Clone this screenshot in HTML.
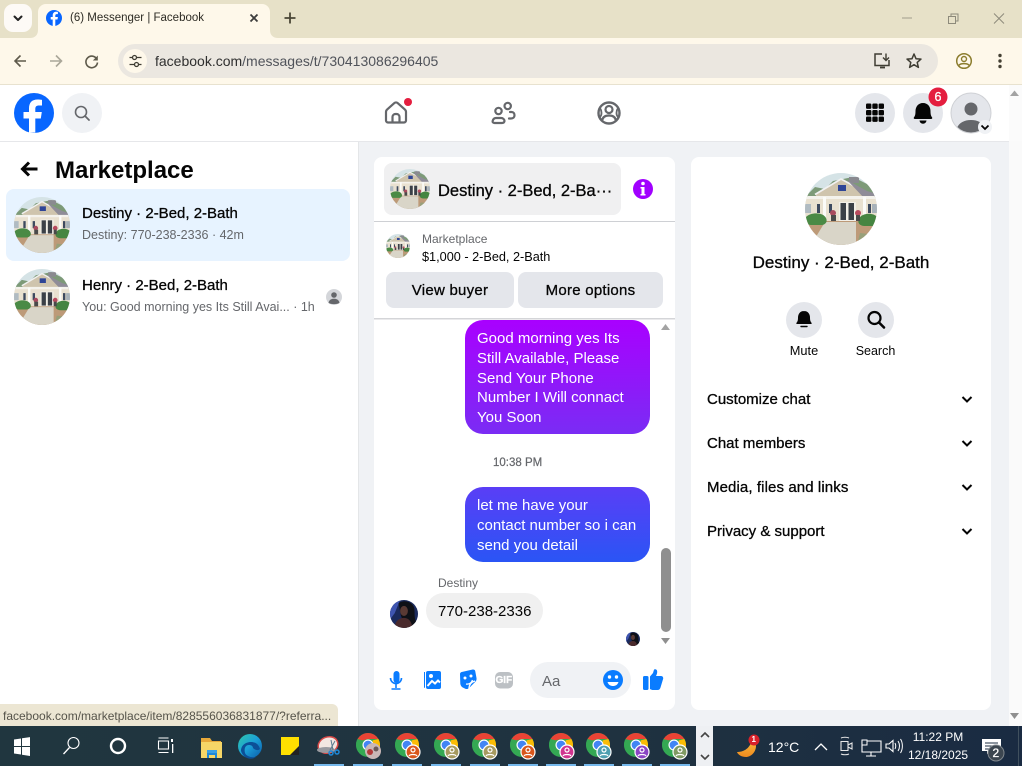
<!DOCTYPE html>
<html lang="en"><head><meta charset="utf-8"><title>(6) Messenger | Facebook</title>
<style>
html,body{margin:0;padding:0;width:1022px;height:766px;overflow:hidden;background:#fff}
body{position:relative;font-family:"Liberation Sans",Arial,sans-serif;color:#050505}
svg.g{position:absolute;left:0;top:0}
.t{position:absolute;white-space:nowrap;line-height:20px;height:20px;font-size:15px}
.s{-webkit-text-stroke:.3px currentColor}
.g6{color:#65676b}
.w{color:#fff}
</style></head><body>
<svg class="g" width="1022" height="766" viewBox="0 0 1022 766" xmlns="http://www.w3.org/2000/svg">
<defs>
<clipPath id="cc"><circle cx="36" cy="36" r="36"/></clipPath>
<symbol id="house" viewBox="0 0 72 72"><g clip-path="url(#cc)">
<rect width="72" height="72" fill="#d5e3e6"/>
<path d="M0 24L10 14l10 2 8-8 20-4 24 12v10H0z" fill="#7d9a78"/>
<path d="M44 4h10v6H44z" fill="#8a8a90"/>
<path d="M11 21L36 6l29 15v6H11z" fill="#cfc4ad"/>
<path d="M10 21.500L36 6l30 16" fill="none" stroke="#f1f1f1" stroke-width="1.800"/>
<path d="M42 7l20 11 10 3v5H60z" fill="#8f8c98"/>
<rect x="33" y="12" width="8" height="6" fill="#2f4596"/>
<rect x="0" y="24" width="72" height="25" fill="#e9e1d0"/>
<rect x="0" y="23" width="72" height="3" fill="#f4f2ec"/>
<rect x="0" y="31" width="6" height="9" fill="#b0bbc2"/><rect x="12" y="31" width="3" height="9" fill="#3d4a5f"/><rect x="24" y="31" width="3" height="9" fill="#3d4a5f"/><rect x="63" y="31" width="3" height="9" fill="#3d4a5f"/><rect x="67" y="31" width="5" height="9" fill="#a8b2ba"/>
<rect x="34" y="29" width="17" height="19" fill="#f2efe7"/><rect x="35.500" y="30" width="5.500" height="17" fill="#3b4047"/><rect x="43.500" y="30" width="5.500" height="17" fill="#3b4047"/>
<rect x="18" y="24" width="3" height="25" fill="#fbfbf8"/><rect x="58" y="24" width="3" height="25" fill="#fbfbf8"/>
<rect x="0" y="48" width="72" height="24" fill="#bd9a78"/>
<path d="M6 72L20 49h31v23z" fill="#d9d5c8"/>
<path d="M1 44c5-5 17-5 20 1 2 4-1 7-5 7H6c-4 0-7-3-5-8z" fill="#4a8a45"/>
<path d="M54 46c2-6 14-7 18-2v9H60c-5 0-8-3-6-7z" fill="#458541"/>
<circle cx="28" cy="40" r="3" fill="#a84a5e"/><circle cx="53" cy="40" r="3" fill="#b84a5e"/>
<rect x="26" y="42" width="5" height="6" fill="#4a4a4a"/><rect x="51" y="42" width="4" height="6" fill="#4a4a4a"/>
<path d="M52 72l3-12 17 2v10z" fill="#97a07a"/>
</g></symbol>
<symbol id="girl" viewBox="0 0 72 72"><g clip-path="url(#cc)">
<rect width="72" height="72" fill="#1b2a5c"/>
<path d="M0 0h26L12 34 0 50z" fill="#3f55b0"/>
<path d="M22 8c14-10 36-4 40 12 3 14-2 32 10 40v12H40L28 40z" fill="#0e1016"/>
<ellipse cx="36" cy="28" rx="10" ry="13" fill="#5a3a34"/>
<path d="M12 72c0-16 10-26 24-26s20 12 22 26z" fill="#4a2a2c"/>
</g></symbol>
<symbol id="chrome" viewBox="0 0 26 26">
<circle cx="13" cy="13" r="13" fill="#34a853"/>
<path d="M13 0A13 13 0 0 1 24.300 6.500L13 6.500 7 8 1.700 6.500A13 13 0 0 1 13 0z" fill="#ea4335"/>
<path d="M1.700 6.500L7.500 16 13 26 1 17.500C-.500 13 0 9 1.700 6.500z" fill="#34a853"/>
<path d="M24.300 6.500A13 13 0 0 1 13 26L18.500 16 18 8z" fill="#fbbc05"/>
<circle cx="13" cy="13" r="6" fill="#fff"/><circle cx="13" cy="13" r="4.700" fill="#4285f4"/>
</symbol>
<linearGradient id="bp" x1="0" y1="0" x2="0" y2="1"><stop offset="0" stop-color="#a900ff"/><stop offset="1" stop-color="#7a2cf4"/></linearGradient>
<linearGradient id="bb" x1="0" y1="0" x2="0" y2="1"><stop offset="0" stop-color="#5a3ef6"/><stop offset="1" stop-color="#2a55f5"/></linearGradient>
<linearGradient id="tb" x1="0" y1="0" x2="1" y2="0"><stop offset="0" stop-color="#20363f"/><stop offset=".6" stop-color="#1f3240"/><stop offset="1" stop-color="#1a2b42"/></linearGradient>
<linearGradient id="edge" x1="0" y1="0" x2="1" y2="1"><stop offset="0" stop-color="#2fc7a8"/><stop offset=".5" stop-color="#1b9fd8"/><stop offset="1" stop-color="#0b5aa8"/></linearGradient>
<linearGradient id="moon" x1="0" y1="0" x2="0" y2="1"><stop offset="0" stop-color="#f8b53a"/><stop offset="1" stop-color="#ee8a1e"/></linearGradient>
</defs>

<!-- chrome frame -->
<rect width="1022" height="38" fill="#e7e1c8"/>
<rect y="38" width="1022" height="46" fill="#fef8ea"/>
<rect y="84" width="1022" height="1" fill="#e8e2cf"/>
<path d="M30 38c5 0 8-3 8-8V12c0-4.500 3.500-8 8-8h216c4.500 0 8 3.500 8 8v18c0 5 3 8 8 8z" fill="#fef8ea"/>
<rect x="4" y="4" width="28" height="28" rx="9" fill="#fdfaf6"/>
<path d="M14.500 16.500L18 20l3.500-3.500" fill="none" stroke="#222" stroke-width="2" stroke-linecap="round" stroke-linejoin="round"/>
<circle cx="54" cy="18" r="8" fill="#0866ff"/>
<path d="M52.700 26v-6.500h-2v-2.500h2v-1.600c0-2.400 1.300-3.700 3.500-3.700.7 0 1.300.1 1.700.2v2.200h-1.200c-1 0-1.400.5-1.400 1.500V17h2.600l-.4 2.500h-2.200V26z" fill="#fff"/>
<path d="M250.500 14.500l7 7M257.500 14.500l-7 7" stroke="#3c3c3c" stroke-width="1.800"/>
<path d="M290 12.500v11M284.500 18h11" stroke="#4a4636" stroke-width="1.800"/>
<path d="M902 18h10" stroke="#a19d8c" stroke-width="1"/>
<path d="M948.500 16.500h7v7h-7zM951 16.500v-2.500h7v7h-2.500" fill="none" stroke="#8d8a7b" stroke-width="1"/>
<path d="M994 13.500l10 10M1004 13.500l-10 10" stroke="#8d8a7b" stroke-width="1"/>
<path d="M26 61H15M20.500 55.500L15 61l5.500 5.500" fill="none" stroke="#5e5a4b" stroke-width="1.600"/>
<path d="M50 61h11M56 55.500l5.500 5.500-5.500 5.500" fill="none" stroke="#aaa799" stroke-width="1.600"/>
<path d="M97 59.500a5.800 5.800 0 1 0 .5 3" fill="none" stroke="#5e5a4b" stroke-width="1.600"/><path d="M97.800 55.500v5h-5z" fill="#5e5a4b"/>
<rect x="118" y="44" width="820" height="34" rx="17" fill="#ebe7e0"/>
<circle cx="135" cy="61" r="12" fill="#fef8ea"/>
<path d="M129.500 57.500h3M137 57.500h4.500M129.500 64.500h4.500M139 64.500h2.500" stroke="#3f3d33" stroke-width="1.300"/>
<circle cx="134.500" cy="57.500" r="2" fill="none" stroke="#3f3d33" stroke-width="1.300"/><circle cx="136.500" cy="64.500" r="2" fill="none" stroke="#3f3d33" stroke-width="1.300"/>
<path d="M882 54h-7v11.500h14V60" fill="none" stroke="#3f3d33" stroke-width="1.500"/><path d="M880 67.500h5" stroke="#3f3d33" stroke-width="1.800"/>
<path d="M886 53.500v6.500M883 57.500l3 3 3-3" fill="none" stroke="#3f3d33" stroke-width="1.400"/>
<path d="M914 54l2 4.700 5 .4-3.800 3.300 1.200 5-4.400-2.700-4.400 2.700 1.200-5-3.800-3.300 5-.4z" fill="none" stroke="#3f3d33" stroke-width="1.500" stroke-linejoin="round"/>
<circle cx="964" cy="61" r="7.300" fill="none" stroke="#8c7d2e" stroke-width="1.500"/><circle cx="964" cy="59" r="2.500" fill="none" stroke="#8c7d2e" stroke-width="1.400"/><path d="M958.800 65.500c1.500-2.500 9-2.500 10.400 0" fill="none" stroke="#8c7d2e" stroke-width="1.400"/>
<circle cx="1000" cy="55.500" r="1.700" fill="#444033"/><circle cx="1000" cy="61" r="1.700" fill="#444033"/><circle cx="1000" cy="66.500" r="1.700" fill="#444033"/>

<!-- page -->
<rect y="141" width="1022" height="585" fill="#f0f2f5"/>
<rect x="1009" y="85" width="13" height="641" fill="#fafafa"/>
<rect y="141" width="358" height="585" fill="#fff"/>
<rect x="358" y="141" width="1" height="585" fill="#e4e6e8"/>
<rect y="85" width="1009" height="56" fill="#fff"/>
<rect y="141" width="1009" height="1" fill="#e6e7ea"/>
<rect x="1009" y="85" width="13" height="56" fill="#fbfbfb"/>
<path d="M1014.500 90.500l-4.500 5.500h9z" fill="#a3a3a3"/><path d="M1010 713l4.500 6 4.500-6z" fill="#8f8f8f"/>

<!-- header -->
<circle cx="34" cy="113" r="20" fill="#0866ff"/>
<path d="M29 132.600V118.500h-5.500V112H29v-3.500c0-6 3-9 8.500-9 1.700 0 3.500.2 4.500.4v5.600h-3c-2.700 0-3.700 1.200-3.700 3.600V112h6.500l-1 6.500h-5.500v14.100z" fill="#fff"/>
<circle cx="82" cy="113" r="20" fill="#f0f2f5"/>
<circle cx="81" cy="112" r="5.500" fill="none" stroke="#65676b" stroke-width="1.600"/><path d="M85 116l4 4" stroke="#65676b" stroke-width="1.800" stroke-linecap="round"/>
<path d="M386 120.500V112c0-1 .5-2 1.200-2.600l7-6.200c1-.9 2.600-.9 3.600 0l7 6.200c.7.600 1.200 1.600 1.200 2.600v8.500c0 1-.8 2-2 2h-16c-1.200 0-2-1-2-2z" fill="none" stroke="#65676b" stroke-width="2.200"/>
<path d="M392.500 122v-5a3 3 0 0 1 3-3h1a3 3 0 0 1 3 3v5" fill="none" stroke="#65676b" stroke-width="2.200"/>
<circle cx="408" cy="102" r="4" fill="#e41e3f"/>
<circle cx="498.500" cy="111" r="3.200" fill="none" stroke="#65676b" stroke-width="2.200"/><circle cx="507.700" cy="106" r="3.200" fill="none" stroke="#65676b" stroke-width="2.200"/>
<path d="M496 118h5c2 0 3.500 1.400 3.500 3 0 1-.8 2-2.500 2h-7.500c-1.500 0-2.200-1-1.800-2.200.5-1.600 1.600-2.800 3.300-2.800z" fill="none" stroke="#65676b" stroke-width="2.200"/>
<path d="M510 112h1.500c2 0 3 1.500 3 3.200 0 2-1.300 3.300-3.500 3.300H509" fill="none" stroke="#65676b" stroke-width="2.200" stroke-linecap="round"/>
<circle cx="609" cy="113" r="10.500" fill="none" stroke="#65676b" stroke-width="2.400"/><circle cx="609" cy="109.500" r="3.500" fill="none" stroke="#65676b" stroke-width="2.200"/>
<path d="M602 121c.5-4 3-5.500 7-5.500s6.500 1.500 7 5.500" fill="none" stroke="#65676b" stroke-width="2.200"/>
<path d="M600 108c2 3 2 7 0 9M618 108c-2 3-2 7 0 9" fill="none" stroke="#65676b" stroke-width="1.800"/>
<circle cx="875" cy="113" r="20" fill="#e4e6eb"/>
<g fill="#050505"><rect x="866" y="103.500" width="5.400" height="5.400" rx="1.200"/><rect x="872.300" y="103.500" width="5.400" height="5.400" rx="1.200"/><rect x="878.600" y="103.500" width="5.400" height="5.400" rx="1.200"/><rect x="866" y="110" width="5.400" height="5.400" rx="1.200"/><rect x="872.300" y="110" width="5.400" height="5.400" rx="1.200"/><rect x="878.600" y="110" width="5.400" height="5.400" rx="1.200"/><rect x="866" y="116.500" width="5.400" height="5.400" rx="1.200"/><rect x="872.300" y="116.500" width="5.400" height="5.400" rx="1.200"/><rect x="878.600" y="116.500" width="5.400" height="5.400" rx="1.200"/></g>
<circle cx="923" cy="113" r="20" fill="#e4e6eb"/>
<path d="M923 103c-5 0-7.500 4-7.500 8 0 3.500-.5 5-1.500 6.300-.6.800-.3 1.700.8 1.700h16.400c1.100 0 1.400-.9.800-1.700-1-1.300-1.500-2.800-1.500-6.300 0-4-2.500-8-7.500-8z" fill="#050505"/><path d="M919.500 120.500a3.500 3.200 0 0 0 7 0z" fill="#050505"/>
<circle cx="938" cy="97" r="9.500" fill="#e41e3f"/>
<circle cx="971" cy="113" r="20" fill="#e4e6eb" stroke="#cfd1d5" stroke-width="1"/>
<clipPath id="av"><circle cx="971" cy="113" r="19.500"/></clipPath>
<g clip-path="url(#av)"><circle cx="971" cy="109" r="6.500" fill="#65676b"/><path d="M956 133c0-8 6-13 15-13s15 5 15 13z" fill="#65676b"/></g>
<circle cx="985" cy="127" r="7" fill="#f0f2f5"/><path d="M981.500 125.500l3.500 3.500 3.500-3.500" fill="none" stroke="#050505" stroke-width="1.800"/>

<!-- left list -->
<path d="M37.500 169H23M29 162.500l-6.500 6.500 6.500 6.500" fill="none" stroke="#050505" stroke-width="3"/>
<rect x="6" y="189" width="344" height="72" rx="8" fill="#e7f3ff"/>
<use href="#house" x="14" y="197" width="56" height="56"/>
<use href="#house" x="14" y="269" width="56" height="56"/>
<circle cx="334" cy="297" r="8" fill="#d4d6da"/><circle cx="334" cy="295" r="2.800" fill="#65676b"/><path d="M328.500 303c.5-3 2.500-4.300 5.500-4.300s5 1.300 5.500 4.300c-3 1.500-8 1.500-11 0z" fill="#65676b"/>

<!-- chat panel -->
<rect x="374" y="157" width="301" height="553" rx="8" fill="#fff"/>
<rect x="384" y="163" width="237" height="52" rx="8" fill="#f0f0f1"/>
<use href="#house" x="390" y="169" width="40" height="40"/>
<circle cx="643" cy="189" r="10" fill="#a100ff"/><rect x="641.500" y="187" width="3" height="8" fill="#fff"/><rect x="640.500" y="194" width="5" height="1.500" fill="#fff"/><rect x="640.500" y="187" width="3" height="1.500" fill="#fff"/><circle cx="643" cy="183.500" r="1.800" fill="#fff"/>
<rect x="374" y="221" width="301" height="1" fill="#ced0d4"/>
<use href="#house" x="386" y="234" width="24" height="24"/>
<rect x="386" y="272" width="128" height="36" rx="8" fill="#e4e6eb"/>
<rect x="518" y="272" width="145" height="36" rx="8" fill="#e4e6eb"/>
<rect x="374" y="318" width="301" height="1.500" fill="#d4d5d8"/>
<rect x="465" y="320" width="185" height="114" rx="18" fill="url(#bp)"/>
<rect x="465" y="487" width="185" height="75" rx="18" fill="url(#bb)"/>
<rect x="661" y="548" width="10" height="84" rx="5" fill="#8f8f8f"/>
<path d="M665.500 324l-4.500 6h9z" fill="#a3a3a3"/><path d="M661 638l4.500 6 4.500-6z" fill="#8f8f8f"/>
<use href="#girl" x="390" y="600" width="28" height="28"/>
<rect x="426" y="593" width="117" height="35" rx="17.500" fill="#f0f0f0"/>
<use href="#girl" x="626" y="632" width="14" height="14"/>
<!-- composer -->
<rect x="393.500" y="671" width="6" height="12" rx="3" fill="#0a7cff"/><path d="M390.500 678a5.500 5.500 0 0 0 11 0M396 684v4M391.500 689h9" fill="none" stroke="#0a7cff" stroke-width="1.600"/>
<path d="M425 672v16l-1-.5V672z" fill="#0a7cff"/><rect x="426" y="671" width="15" height="18" rx="2" fill="#0a7cff"/><circle cx="431" cy="676" r="2" fill="#fff"/><path d="M427.500 686l4.500-5 3 2.500 3-3 2 2" fill="none" stroke="#fff" stroke-width="2"/>
<path d="M460 674c0-1 .7-1.700 1.700-2l11-2.500c1.200-.2 2.300.4 2.500 1.500l1.300 7c.3 1.500-.2 3-1.400 4l-6 6c-1 1-2.500 1.300-3.800.7l-2-.9c-1.700-.8-2.800-2.300-3-4.200z" fill="#0a7cff"/><circle cx="465" cy="678" r="1.500" fill="#fff"/><circle cx="471" cy="676" r="1.500" fill="#fff"/><path d="M466 684c3 .5 5.500-1 6.500-4M469 689c0-4 2-7 6-8" fill="none" stroke="#fff" stroke-width="1.300"/>
<rect x="495" y="672" width="18" height="16.500" rx="5" fill="#bcc0c4"/>
<rect x="530" y="662" width="101" height="36" rx="18" fill="#f0f2f5"/>
<circle cx="613" cy="680" r="10" fill="#0a7cff"/><circle cx="609.500" cy="677" r="1.700" fill="#fff"/><circle cx="616.500" cy="677" r="1.700" fill="#fff"/><path d="M607.500 682c1 3 3 4 5.500 4s4.500-1 5.500-4z" fill="#fff"/>
<rect x="643" y="676" width="5.500" height="14" rx="1.500" fill="#0a7cff"/><path d="M650 676.500l3-3.500c.5-1.500.8-3 1.200-3.500 1.500-.7 3 .3 3 2.200 0 1.500-.5 3-1.200 4.300h5c1.800 0 2.700 1.800 2 3.300l-2.500 8.200c-.4 1.500-1.400 2.500-3 2.500H653c-1.500 0-3-1-3-1z" fill="#0a7cff"/>

<!-- right panel -->
<rect x="691" y="157" width="300" height="553" rx="8" fill="#fff"/>
<use href="#house" x="805" y="173" width="72" height="72"/>
<circle cx="804" cy="320" r="18" fill="#e4e6eb"/><circle cx="876" cy="320" r="18" fill="#e4e6eb"/>
<path d="M804 311c-4 0-6 3.200-6 6.500 0 3-.5 4.200-1.500 5.300-.5.600-.2 1.200.6 1.200h13.800c.8 0 1.100-.6.600-1.200-1-1.100-1.500-2.300-1.500-5.300 0-3.300-2-6.500-6-6.500z" fill="#050505"/><path d="M801 326.500h6" stroke="#050505" stroke-width="1.400" stroke-linecap="round"/>
<circle cx="874.500" cy="318" r="6" fill="none" stroke="#050505" stroke-width="2.200"/><path d="M879 322.500l5 5" stroke="#050505" stroke-width="2.600" stroke-linecap="round"/>
<g fill="none" stroke="#050505" stroke-width="2"><path d="M962.500 397l4.500 4.500 4.500-4.500"/><path d="M962.500 441l4.500 4.500 4.500-4.500"/><path d="M962.500 485l4.500 4.500 4.500-4.500"/><path d="M962.500 529l4.500 4.500 4.500-4.500"/></g>

<!-- status bubble -->
<path d="M0 704h332a6 6 0 0 1 6 6v16H0z" fill="#ece6d3"/>

<!-- taskbar -->
<rect y="726" width="1022" height="40" fill="url(#tb)"/>
<g fill="#fff"><path d="M14 739.500l7-1v7.500h-7zM22 738.300l8-1.200v8.900h-8zM14 747h7v7.500l-7-1zM22 747h8v9l-8-1.200z"/></g>
<circle cx="73.500" cy="743" r="5.500" fill="none" stroke="#fff" stroke-width="1.100"/><path d="M69.500 747.500l-6 6.500" stroke="#fff" stroke-width="1.300"/>
<circle cx="118" cy="746" r="7" fill="none" stroke="#fff" stroke-width="2.400"/>
<path d="M158.500 741h10v8h-10zM158.500 738h10M158.500 752.500h10" fill="none" stroke="#fff" stroke-width="1.100"/><rect x="171" y="739" width="2" height="3" fill="#fff"/><rect x="172" y="744" width="1.300" height="9" fill="#fff"/>
<path d="M201 738h9l2 3h9v17h-20z" fill="#e8a93a"/><rect x="201" y="742" width="21" height="16" fill="#f6d667"/><path d="M207 752h10v6h-2v-3h-6v3h-2z" fill="#1e88d8"/><rect x="207" y="750" width="10" height="3" fill="#3aa0e4"/>
<circle cx="250" cy="746" r="12" fill="url(#edge)"/><path d="M241 751c0-6 5-9 10-9 5 0 8 3 9 7-2 2-5 1-7-1 0-2-2-3-4-3-4 0-5 4-4 8 1 3 6 5 11 4-5 4-13 1-15-6z" fill="#0c4f97"/>
<rect x="281" y="737" width="18" height="18" fill="#ffe000"/><path d="M290 755l9-9v9z" fill="#222"/>
<ellipse cx="328" cy="745" rx="10" ry="8" fill="#f3e7e2" stroke="#d84a48" stroke-width="1.500" transform="rotate(-20 328 745)"/><ellipse cx="326" cy="750" rx="9" ry="3" fill="#9a9aa0"/><path d="M331 740l2 10M335 741l-5 9" stroke="#5a7a90" stroke-width="1"/><circle cx="331" cy="753" r="2" fill="none" stroke="#1e88d8" stroke-width="1.500"/><circle cx="337" cy="752" r="2" fill="none" stroke="#1e88d8" stroke-width="1.500"/>
<rect x="314" y="764" width="30" height="2" fill="#76b9ed"/>

<use href="#chrome" x="356" y="733" width="24" height="24"/>
<circle cx="373" cy="751" r="8" fill="#c9b7b7"/><circle cx="370" cy="752" r="3" fill="#b23a3a"/><circle cx="376" cy="749" r="2.500" fill="#6a5a5a"/>
<use href="#chrome" x="395" y="733" width="24" height="24"/>
<use href="#chrome" x="434" y="733" width="24" height="24"/>
<use href="#chrome" x="472" y="733" width="24" height="24"/>
<use href="#chrome" x="510" y="733" width="24" height="24"/>
<use href="#chrome" x="549" y="733" width="24" height="24"/>
<use href="#chrome" x="586" y="733" width="24" height="24"/>
<use href="#chrome" x="624" y="733" width="24" height="24"/>
<use href="#chrome" x="662" y="733" width="24" height="24"/>
<g stroke="#fff" stroke-width="1.200" fill="none">
<g><circle cx="413" cy="752" r="7" fill="#d9561b"/><circle cx="413" cy="750" r="2"/><path d="M409 756c1-2 7-2 8 0"/></g>
<g><circle cx="452" cy="752" r="7" fill="#a69a5f"/><circle cx="452" cy="750" r="2"/><path d="M448 756c1-2 7-2 8 0"/></g>
<g><circle cx="490" cy="752" r="7" fill="#a69a5f"/><circle cx="490" cy="750" r="2"/><path d="M486 756c1-2 7-2 8 0"/></g>
<g><circle cx="528" cy="752" r="7" fill="#d9561b"/><circle cx="528" cy="750" r="2"/><path d="M524 756c1-2 7-2 8 0"/></g>
<g><circle cx="567" cy="752" r="7" fill="#d0348f"/><circle cx="567" cy="750" r="2"/><path d="M563 756c1-2 7-2 8 0"/></g>
<g><circle cx="604" cy="752" r="7" fill="#4f9fb0"/><circle cx="604" cy="750" r="2"/><path d="M600 756c1-2 7-2 8 0"/></g>
<g><circle cx="642" cy="752" r="7" fill="#8a45c4"/><circle cx="642" cy="750" r="2"/><path d="M638 756c1-2 7-2 8 0"/></g>
<g><circle cx="680" cy="752" r="7" fill="#7f9a62"/><circle cx="680" cy="750" r="2"/><path d="M676 756c1-2 7-2 8 0"/></g>
</g>
<g fill="#76b9ed"><rect x="353" y="764" width="30" height="2"/><rect x="392" y="764" width="30" height="2"/><rect x="431" y="764" width="30" height="2"/><rect x="470" y="764" width="30" height="2"/><rect x="508" y="764" width="30" height="2"/><rect x="546" y="764" width="30" height="2"/><rect x="584" y="764" width="30" height="2"/><rect x="622" y="764" width="30" height="2"/><rect x="660" y="764" width="30" height="2"/></g>

<rect x="696" y="726" width="17" height="40" fill="#eef0f3"/>
<path d="M701 737l4-4 4 4M701 755l4 4 4-4" fill="none" stroke="#444" stroke-width="1.600"/>

<path d="M737 752c5 0 11-2 14-9 2-2 5 0 5 3 0 6-5 11-10 11-4 0-8-2-9-5z" fill="url(#moon)"/>
<circle cx="754" cy="740" r="5.500" fill="#d8212a"/>
<path d="M815 750l6-6 6 6" fill="none" stroke="#fff" stroke-width="1.300"/>
<path d="M841 741.500h7v9h-7zM848 745l4-2v6l-4-2" fill="none" stroke="#e8e8e8" stroke-width="1.100"/><path d="M841 738c2-1 6-1 8 0M841 754c2 1 6 1 8 0" fill="none" stroke="#e8e8e8" stroke-width="1"/>
<path d="M862 741h19v11h-19zM871 752v4M866 756h10" fill="none" stroke="#fff" stroke-width="1.100"/><rect x="862" y="740" width="5" height="5" fill="#1c2e40" stroke="#fff" stroke-width="1"/>
<path d="M886 744h3l4-3.500v11l-4-3.500h-3z" fill="none" stroke="#fff" stroke-width="1.100"/><path d="M895 743c1 2 1 4 0 6M898 741c2 3 2 7 0 10M900.500 739c2.500 4 2.500 10 0 14" fill="none" stroke="#fff" stroke-width="1"/>
<path d="M982 739h19v12h-11l-3 3v-3h-5z" fill="#fff"/><path d="M985 743h13M985 746h13M985 749h9" stroke="#1c2e40" stroke-width="1"/>
<circle cx="996" cy="753" r="8" fill="#3c4650" stroke="#7f868c" stroke-width="1"/>
<rect x="1018" y="726" width="1" height="40" fill="#40505e"/>
</svg>

<div class="t" style="left:70px;top:8px;font-size:11.500px;color:#2e2c25">(6) Messenger | Facebook</div>
<div class="t" style="left:155px;top:51px;font-size:14px;color:#2f2f2f">facebook.com<span style="color:#50535a">/messages/t/730413086296405</span></div>
<div class="t w s" style="left:938px;top:87px;width:0;font-size:12.500px;text-indent:-3.500px">6</div>

<div class="t" style="left:55px;top:156px;height:30px;line-height:30px;font-size:24px;font-weight:700">Marketplace</div>
<div class="t s" style="left:82px;top:204px;font-size:15px">Destiny · 2-Bed, 2-Bath</div>
<div class="t g6" style="left:82px;top:225px;font-size:12.500px">Destiny: 770-238-2336 · 42m</div>
<div class="t s" style="left:82px;top:276px;font-size:15px">Henry · 2-Bed, 2-Bath</div>
<div class="t g6" style="left:82px;top:297px;font-size:12.500px">You: Good morning yes Its Still Avai... · 1h</div>

<div class="t s" style="left:438px;top:181px;font-size:16.500px">Destiny · 2-Bed, 2-Ba···</div>
<div class="t g6" style="left:422px;top:229px;font-size:12px">Marketplace</div>
<div class="t" style="left:422px;top:247px;font-size:12.700px">$1,000 - 2-Bed, 2-Bath</div>
<div class="t s" style="left:386px;top:281px;width:128px;text-align:center;font-size:15px;letter-spacing:.25px">View buyer</div>
<div class="t s" style="left:518px;top:281px;width:145px;text-align:center;font-size:15px;letter-spacing:.25px">More options</div>

<div class="t w" style="left:477px;top:329px">Good morning yes Its</div>
<div class="t w" style="left:477px;top:349px">Still Available, Please</div>
<div class="t w" style="left:477px;top:369px">Send Your Phone</div>
<div class="t w" style="left:477px;top:388px">Number I Will connact</div>
<div class="t w" style="left:477px;top:408px">You Soon</div>
<div class="t g6 s" style="left:493px;top:453px;font-size:11.500px;-webkit-text-stroke:.2px">10:38 PM</div>
<div class="t w" style="left:477px;top:496px">let me have your</div>
<div class="t w" style="left:477px;top:516px">contact number so i can</div>
<div class="t w" style="left:477px;top:536px">send you detail</div>
<div class="t g6" style="left:438px;top:573px;font-size:12px">Destiny</div>
<div class="t" style="left:438px;top:601px;font-size:15px;margin-top:1px">770-238-2336</div>
<div class="t w s" style="left:495.500px;top:671px;font-size:10px;font-weight:700">GIF</div>
<div class="t g6" style="left:542px;top:672px;font-size:15px">Aa</div>

<div class="t s" style="left:691px;top:253px;width:300px;text-align:center;font-size:17px">Destiny · 2-Bed, 2-Bath</div>
<div class="t" style="left:768px;top:341px;width:72px;text-align:center;font-size:12.800px">Mute</div>
<div class="t" style="left:840px;top:341px;width:71px;text-align:center;font-size:12.500px">Search</div>
<div class="t s" style="left:707px;top:390px;font-size:15px">Customize chat</div>
<div class="t s" style="left:707px;top:434px;font-size:15px">Chat members</div>
<div class="t s" style="left:707px;top:478px;font-size:15px;letter-spacing:.1px">Media, files and links</div>
<div class="t s" style="left:707px;top:522px;font-size:15px">Privacy &amp; support</div>

<div class="t" style="left:3px;top:706px;font-size:12px;color:#55534a">facebook.com/marketplace/item/828556036831877/?referra...</div>

<div class="t w" style="left:752px;top:735px;width:4px;font-size:8px;font-weight:700;line-height:10px;height:10px;text-indent:-.5px">1</div>
<div class="t w" style="left:768px;top:737px;font-size:14px">12°C</div>
<div class="t w" style="left:908px;top:727px;width:60px;text-align:center;font-size:12px">11:22 PM</div>
<div class="t w" style="left:908px;top:745px;width:60px;text-align:center;font-size:12px">12/18/2025</div>
<div class="t w s" style="left:992.500px;top:743px;font-size:12px">2</div>
</body></html>
